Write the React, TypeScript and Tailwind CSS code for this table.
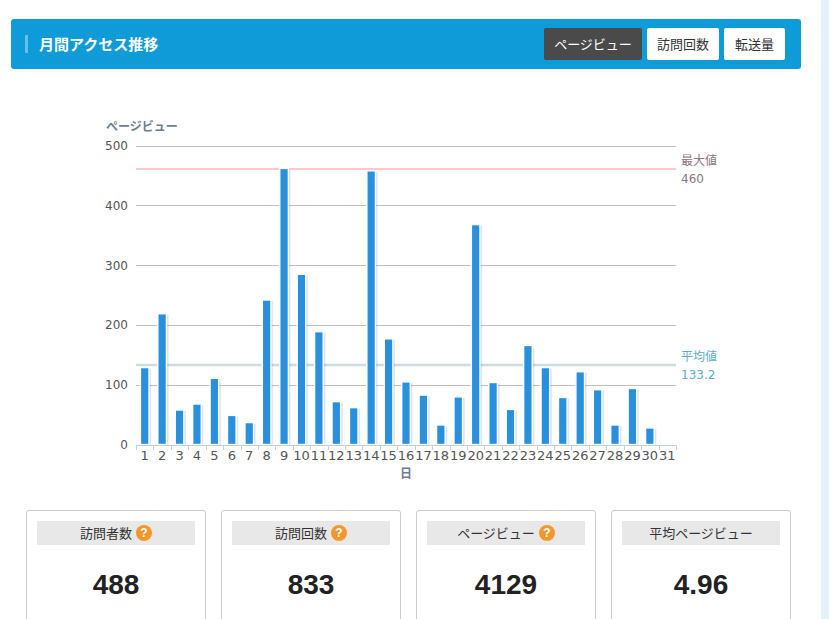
import React from "react";

const JP = "font-['Noto_Sans_CJK_JP',sans-serif]";

const views = [
	127, 217, 56, 66, 109, 47, 35, 240, 460, 283, 187, 70, 60, 456, 175, 103, 81,
	31, 78, 366, 102, 57, 164, 127, 77, 120, 90, 31, 92, 26, 0,
];

// 軸のスケール
const X0 = 136;
const X1 = 676;
const Y0 = 444.5;
const K = 0.598;
const step = (X1 - X0) / 31;
const yOf = (v: number) => Y0 - v * K;

function Chart() {
	const ticks = [0, 100, 200, 300, 400, 500];
	return (
		<svg
			className="block ml-[90px] mt-[41px]"
			width={640}
			height={375}
			viewBox="90 110 640 375"
		>
			<text
				x={106}
				y={131}
				fontSize={12}
				fontWeight={700}
				fill="#6b7d95"
				fontFamily="'Noto Sans CJK JP', sans-serif"
			>
				ページビュー
			</text>
			{ticks.map((t) => (
				<g key={t}>
					{t > 0 && (
						<line
							x1={X0}
							x2={X1}
							y1={Math.round(yOf(t)) + 0.5}
							y2={Math.round(yOf(t)) + 0.5}
							stroke="#c0c0c0"
						/>
					)}
					<text
						x={128}
						y={yOf(t) + 4.5}
						textAnchor="end"
						fontSize={12}
						fill="#555"
						fontFamily="'DejaVu Sans', sans-serif"
					>
						{t}
					</text>
				</g>
			))}
			<line x1={X0} x2={X1} y1={169} y2={169} stroke="#ffc9cb" strokeWidth={2} />
			<line x1={X0} x2={X1} y1={365} y2={365} stroke="#c5dfe4" strokeWidth={2.5} />
			{views.map((v, i) => {
				if (!v) return null;
				const cx = X0 + step * (i + 0.5);
				const top = yOf(v);
				return (
					<g key={i}>
						<rect x={cx - 3} y={top} width={9.5} height={Y0 - top} fill="#000" opacity={0.1} />
						<rect x={cx - 3.5} y={top - 0.5} width={8.5} height={Y0 - top + 0.5} fill="#000" opacity={0.12} />
						<rect
							x={cx - 4.3}
							y={top - 1}
							width={8.6}
							height={Y0 - top + 1}
							fill="#2890dc"
							stroke="#fff"
							strokeWidth={1.4}
						/>
					</g>
				);
			})}
			<line x1={X0} x2={X1} y1={445.5} y2={445.5} stroke="#c0d0e0" />
			{views.map((_, i) => (
				<line
					key={i}
					x1={Math.round(X0 + step * i) + 0.5}
					x2={Math.round(X0 + step * i) + 0.5}
					y1={445}
					y2={450}
					stroke="#c0d0e0"
				/>
			))}
			<line x1={X1 + 0.5} x2={X1 + 0.5} y1={445} y2={450} stroke="#c0d0e0" />
			{views.map((_, i) => (
				<text
					key={i}
					x={X0 + step * (i + 0.5)}
					y={460}
					textAnchor="middle"
					fontSize={13}
					fill="#555"
					fontFamily="'DejaVu Sans', sans-serif"
				>
					{i + 1}
				</text>
			))}
			<text
				x={406}
				y={478}
				textAnchor="middle"
				fontSize={12}
				fontWeight={700}
				fill="#6b7d95"
				fontFamily="'Noto Sans CJK JP', sans-serif"
			>
				日
			</text>
			<g fontSize={12} fontFamily="'DejaVu Sans', 'Noto Sans CJK JP', sans-serif">
				<text x={681} y={165} fill="#8c7585" fontFamily="'Noto Sans CJK JP', sans-serif">
					最大値
				</text>
				<text x={681} y={183} fill="#8c7585">
					460
				</text>
				<text x={681} y={361} fill="#5aaec8" fontFamily="'Noto Sans CJK JP', sans-serif">
					平均値
				</text>
				<text x={681} y={379} fill="#5aaec8">
					133.2
				</text>
			</g>
		</svg>
	);
}

function Help() {
	return (
		<span className="inline-flex h-4 w-4 items-center justify-center rounded-full bg-[#f5962a] text-[12px] font-bold leading-none text-white font-['Liberation_Sans',sans-serif]">
			?
		</span>
	);
}

function StatCard({ label, value, help = true }: { label: string; value: string; help?: boolean }) {
	return (
		<div className="h-[130px] w-[180px] rounded-[3px] border border-[#cccccc] bg-white px-[10px] pt-[10px]">
			<div className="flex h-6 items-center justify-center gap-1 bg-[#e8e8e8]">
				<span className={`text-[13px] text-[#333] ${JP}`}>{label}</span>
				{help && <Help />}
			</div>
			<div className="mt-[24px] text-center text-[28px] font-bold leading-8 text-[#222] font-['Liberation_Sans',sans-serif]">
				{value}
			</div>
		</div>
	);
}

export default function App() {
	return (
		<div className="flex h-[619px] overflow-hidden bg-white">
			<div className="w-[821px] pt-[19px]">
				<div className="ml-[11px] flex h-[50px] w-[790px] items-center justify-between rounded-[3px] bg-[#0f9bd7] pl-[14px] pr-4">
					<div className="flex items-center gap-[11px]">
						<span className="h-[18px] w-[3px] bg-[#62c0ea]" />
						<h1 className={`text-[15px] font-bold text-white ${JP}`}>月間アクセス推移</h1>
					</div>
					<div className={`flex gap-[5px] text-[13px] ${JP}`}>
						<button className="h-8 w-[98px] rounded-[2px] bg-[#4a4a4a] text-white">ページビュー</button>
						<button className="h-8 w-[72px] rounded-[2px] bg-white text-[#333]">訪問回数</button>
						<button className="h-8 w-[61px] rounded-[2px] bg-white text-[#333]">転送量</button>
					</div>
				</div>
				<Chart />
				<div className="ml-[26px] mt-[25px] flex gap-[15px]">
					<StatCard label="訪問者数" value="488" />
					<StatCard label="訪問回数" value="833" />
					<StatCard label="ページビュー" value="4129" />
					<StatCard label="平均ページビュー" value="4.96" help={false} />
				</div>
			</div>
			<div className="w-2 bg-[#e4f1f9]" />
		</div>
	);
}
